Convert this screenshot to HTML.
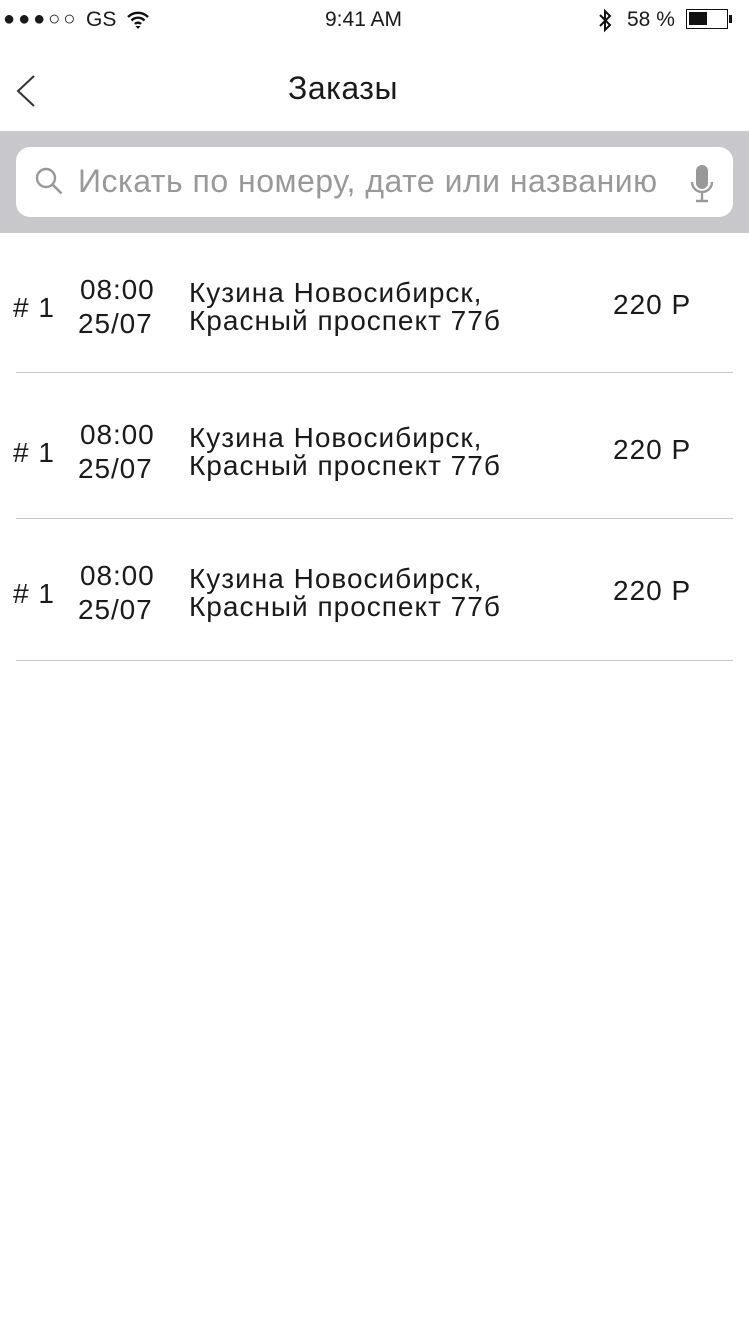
<!DOCTYPE html>
<html><head><meta charset="utf-8"><style>
body{margin:0;width:749px;height:1334px;background:#fff;font-family:"Liberation Sans","Noto Sans CJK SC",sans-serif;color:#1a1a1a;position:relative;overflow:hidden}
.a{position:absolute;white-space:nowrap}
.sep{position:absolute;left:16px;width:717px;height:1px;background:#c8c8c8}
.t{font-size:28px;letter-spacing:1px}
.d{font-size:28px;letter-spacing:0.9px}
</style></head><body>
<div class="a" style="left:3px;top:8px;font-size:20px;letter-spacing:3px">●●●○○</div>
<div class="a" style="left:86px;top:8px;font-size:21px">GS</div>
<svg class="a" style="left:126px;top:10px" width="24" height="20" viewBox="0 0 24 20"><path d="M2 7a14 14 0 0 1 20 0M5.5 10.5a9 9 0 0 1 13 0M9 14a4 4 0 0 1 6 0" stroke="#111" stroke-width="2.4" fill="none"/><path d="M12 19l-2.5-3h5z" fill="#111"/></svg>
<div class="a" style="left:325px;top:8px;font-size:21px">9:41 AM</div>
<svg class="a" style="left:597px;top:8px" width="16" height="26"><path d="M3 7l10 10-5 5V3l5 5L3 18" stroke="#111" stroke-width="2" fill="none"/></svg>
<div class="a" style="left:627px;top:8px;font-size:21px">58 %</div>
<div class="a" style="left:686px;top:9px;width:42px;height:20px;border:1.5px solid #111;box-sizing:border-box"><div style="margin:2px;width:18px;height:13px;background:#111"></div></div>
<div class="a" style="left:729px;top:15px;width:3px;height:8px;background:#111"></div>
<svg class="a" style="left:14px;top:74px" width="24" height="34"><path d="M20 2L4 17l16 15" stroke="#333" stroke-width="2" fill="none"/></svg>
<div class="a" style="left:288px;top:70px;font-size:32px;letter-spacing:0.5px">Заказы</div>
<div class="a" style="left:0;top:131px;width:749px;height:102px;background:#c8c8cc"></div>
<div class="a" style="left:16px;top:147px;width:717px;height:70px;background:#fff;border-radius:14px"></div>
<svg class="a" style="left:34px;top:166px" width="32" height="32"><circle cx="12" cy="12" r="9" stroke="#999" stroke-width="2.4" fill="none"/><path d="M18.5 18.5l9 9" stroke="#999" stroke-width="2.6"/></svg>
<div class="a" style="left:78px;top:163px;font-size:32px;color:#999;letter-spacing:0.5px">Искать по номеру, дате или названию</div>
<svg class="a" style="left:688px;top:163px" width="28" height="42"><rect x="8" y="2" width="12" height="24" rx="6" fill="#999"/><path d="M4 19a10 10 0 0 0 20 0M14 29v8M8 38h12" stroke="#999" stroke-width="2.4" fill="none"/></svg>

<div class="a t" style="left:13px;top:292px">#&nbsp;1</div><div class="a d" style="left:80px;top:274px">08:00</div><div class="a d" style="left:78px;top:308px">25/07</div><div class="a t" style="left:189px;top:279px;line-height:28px">Кузина Новосибирск,<br>Красный проспект 77б</div><div class="a t" style="left:613px;top:289px">220 Р</div>
<div class="sep" style="top:372px"></div>
<div class="a t" style="left:13px;top:437px">#&nbsp;1</div><div class="a d" style="left:80px;top:419px">08:00</div><div class="a d" style="left:78px;top:453px">25/07</div><div class="a t" style="left:189px;top:424px;line-height:28px">Кузина Новосибирск,<br>Красный проспект 77б</div><div class="a t" style="left:613px;top:434px">220 Р</div>
<div class="sep" style="top:518px"></div>
<div class="a t" style="left:13px;top:578px">#&nbsp;1</div><div class="a d" style="left:80px;top:560px">08:00</div><div class="a d" style="left:78px;top:594px">25/07</div><div class="a t" style="left:189px;top:565px;line-height:28px">Кузина Новосибирск,<br>Красный проспект 77б</div><div class="a t" style="left:613px;top:575px">220 Р</div>
<div class="sep" style="top:660px"></div>
</body></html>
